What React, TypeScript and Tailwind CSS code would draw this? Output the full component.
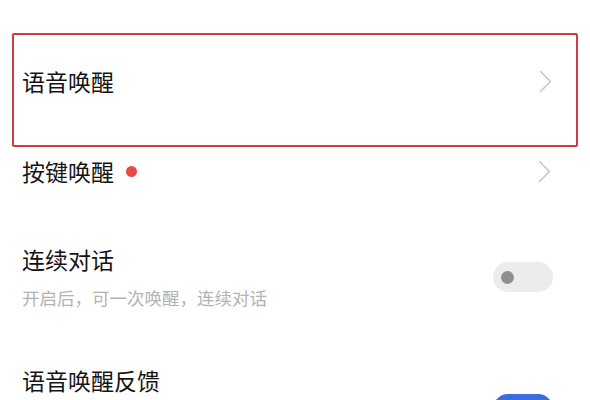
import React from "react";

const Chevron = () => (
  <svg width="13" height="23" viewBox="0 0 13 23" fill="none">
    <path d="M1.5 1.5 L11.5 11.5 L1.5 21.5" stroke="#c8c8c8" strokeWidth="1.6" strokeLinecap="round" strokeLinejoin="round" />
  </svg>
);

export default function App() {
  const font = { fontFamily: '"Noto Sans CJK SC", "Noto Sans", sans-serif' };
  return (
    <div className="w-[590px] h-[400px] overflow-hidden bg-white" style={font}>
      <div className="flex flex-col px-[12px] pt-[33px]">
        <div className="h-[114px] border-2 border-[#d23b3b] rounded-[2px] flex items-center justify-between pl-[8px] pr-[24px] pb-[18px]">
          <span className="text-[23px] leading-[30px] text-[#141414]">语音唤醒</span>
          <Chevron />
        </div>
        <div className="h-[48px] flex items-center justify-between pl-[10px] pr-[27px]">
          <div className="flex items-center gap-[12px]">
            <span className="text-[23px] leading-[30px] text-[#141414]">按键唤醒</span>
            <span className="w-[11px] h-[11px] rounded-full bg-[#e84a4a]" />
          </div>
          <Chevron />
        </div>
        <div className="flex items-center justify-between pl-[10px] pr-[25px] pt-[49px]">
          <div className="flex flex-col">
            <span className="text-[23px] leading-[30px] text-[#141414]">连续对话</span>
            <span className="mt-[12px] text-[17.5px] leading-[24px] text-[#b3b3b3]">开启后，可一次唤醒，连续对话</span>
          </div>
          <div className="w-[60px] h-[30px] rounded-full bg-[#ececec] flex items-center pl-[8px]">
            <span className="w-[13px] h-[13px] rounded-full bg-[#8f8f8f]" />
          </div>
        </div>
        <div className="flex items-start justify-between pl-[10px] pr-[25px] mt-[55px]">
          <span className="text-[23px] leading-[30px] text-[#141414]">语音唤醒反馈</span>
          <div className="mt-[29px] w-[60px] h-[30px] rounded-full bg-[#3c6ce0] flex items-center justify-end pr-[8px]">
            <span className="w-[13px] h-[13px] rounded-full bg-white" />
          </div>
        </div>
      </div>
    </div>
  );
}
